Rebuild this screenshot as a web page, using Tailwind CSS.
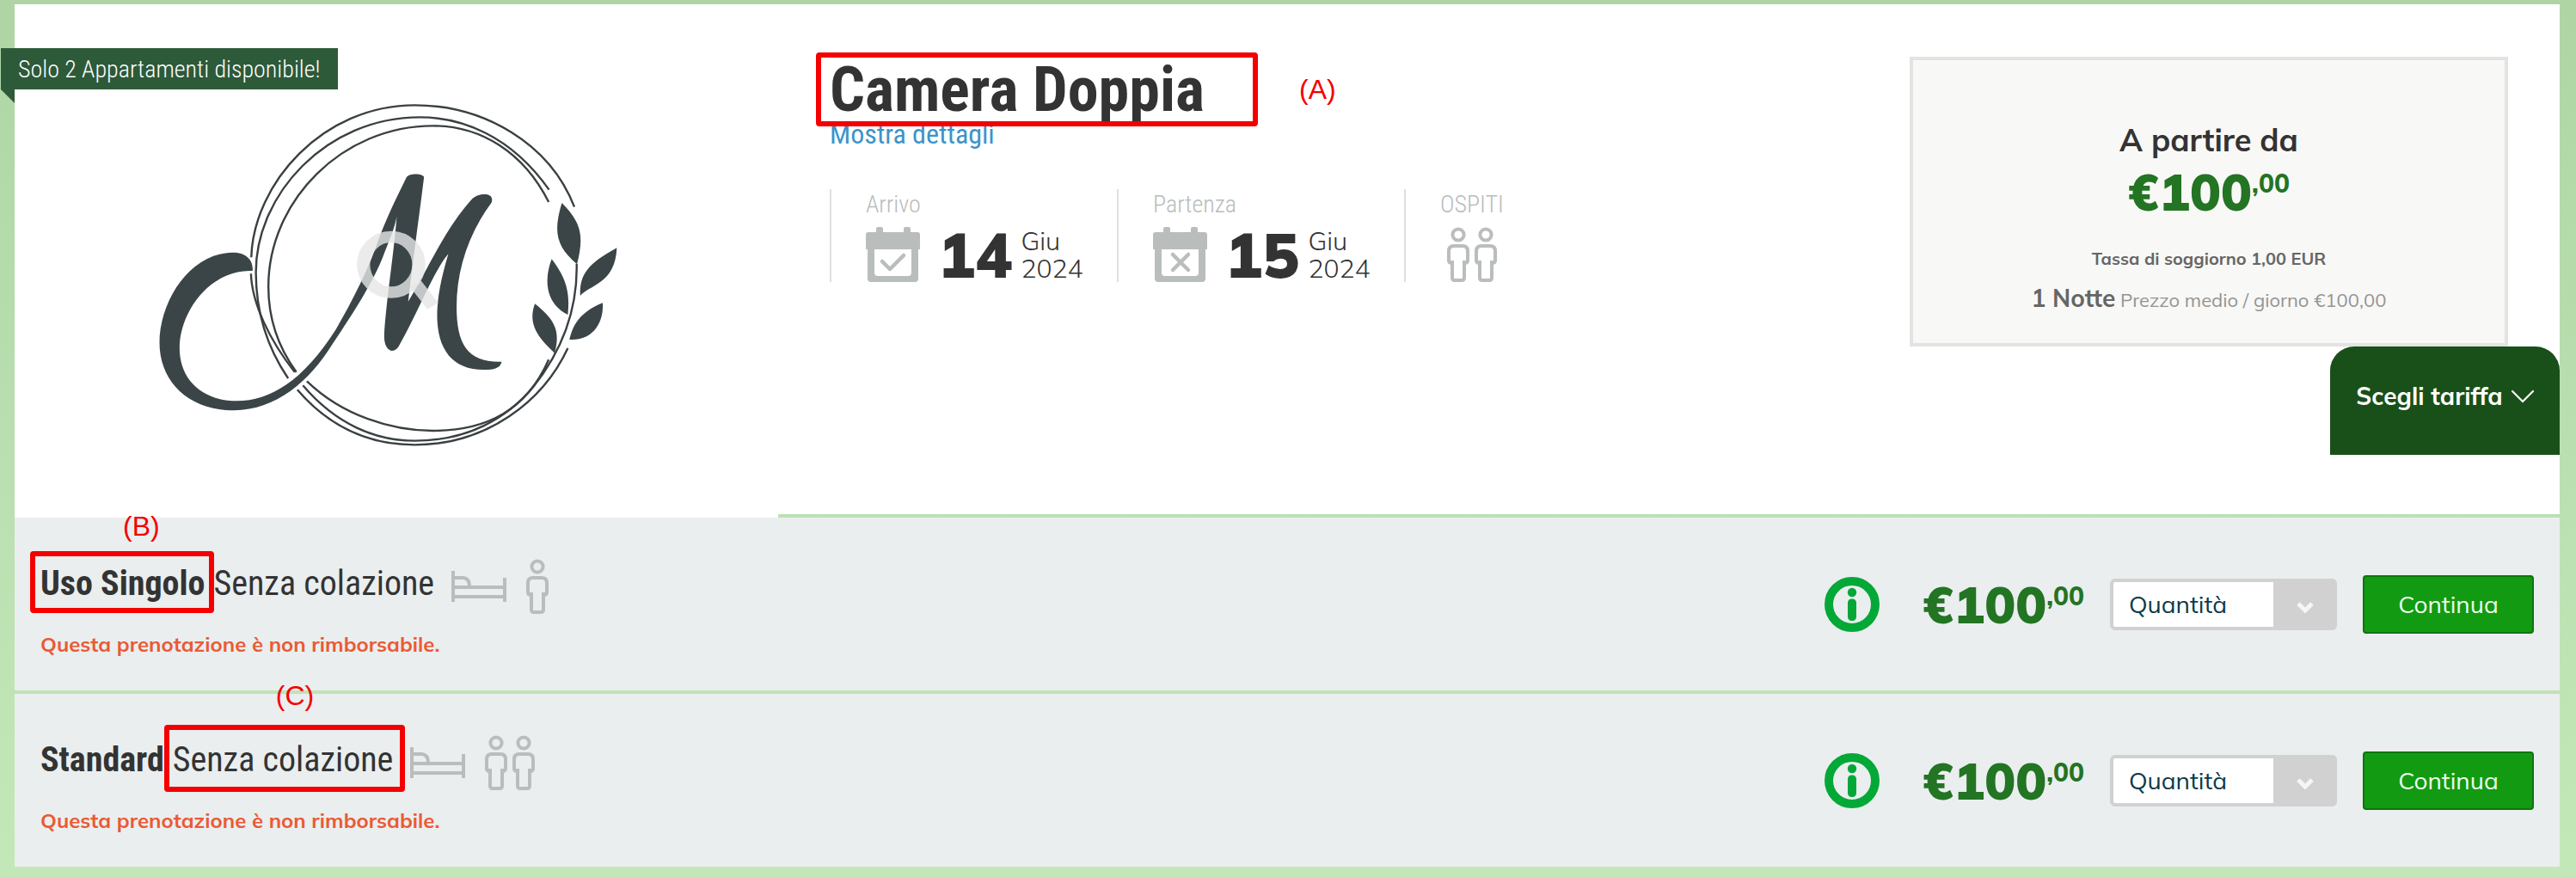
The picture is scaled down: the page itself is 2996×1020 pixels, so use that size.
<!DOCTYPE html>
<html lang="it">
<head>
  <meta charset="UTF-8" />
  <meta name="viewport" content="width=device-width, initial-scale=1.0" />
  <title>Camera Doppia</title>
  <script src="https://cdn.jsdelivr.net/npm/@tailwindcss/browser@4"></script>
</head>
<body class="min-h-screen bg-linear-to-b from-[#aed5a3] via-[#b9dfb0] to-[#c3e8b8] pt-[5px] pb-3 font-[Mulish,Nunito,sans-serif] text-[#333]">

  <!-- shared icons -->
  <svg class="hidden">
    <symbol id="person" viewBox="0 0 26 64">
      <g fill="none" stroke="#b9bdbc" stroke-width="4">
        <circle cx="13" cy="9" r="6.6" />
        <path d="M8 22H18Q24 22 24 28V39Q24 42 20 42V59Q20 62 17 62H9Q6 62 6 59V42Q2 42 2 39V28Q2 22 8 22Z" />
        <path d="M6 39V44M20 39V44" />
      </g>
    </symbol>
    <symbol id="bed" viewBox="0 0 64 36">
      <g fill="none" stroke="#b9bdbc" stroke-width="4">
        <path d="M2 0V36M62 8V36M2 19H62M2 30H62" />
        <path d="M3 8H14Q21 9 21 18" />
      </g>
    </symbol>
    <symbol id="info" viewBox="0 0 64 64">
      <circle cx="32" cy="32" r="27" fill="none" stroke="#04a837" stroke-width="10" />
      <circle cx="32" cy="18" r="5.2" fill="#04a837" />
      <rect x="27" y="25.500" width="10" height="25.500" rx="4.500" fill="#04a837" />
    </symbol>
    <symbol id="calendar" viewBox="0 0 64 64">
      <path fill="#b9bdbc" fill-rule="evenodd" d="M12 6V2Q12 0 14 0H18Q20 0 20 2V6H44V2Q44 0 46 0H50Q52 0 52 2V6H60Q63 6 63 9V26H61V60Q61 64 57 64H6Q2 64 2 60V26H0V9Q0 6 3 6ZM10 26V53Q10 57 14 57H49Q53 57 53 53V26Z" />
    </symbol>
  </svg>

  <main class="mx-[17px] mr-[19px]">
    <!-- room -->
    <section class="relative flex">
      <div class="w-[30%] bg-white pt-[95px] pb-[62px]">
        <svg class="mx-auto h-[440px] w-[600px]" viewBox="0 0 1568 1320" preserveAspectRatio="none">
          <g fill="none" stroke="#3a4042" stroke-width="2.400">
            <path vector-effect="non-scaling-stroke" d="M1325 422C1250 200 1050 67 840 67C560 67 350 340 343 598M342 655C345 760 400 890 475 998" />
            <path vector-effect="non-scaling-stroke" d="M1248 362C1130 170 980 109 855 109C570 109 357 380 357 650C357 780 390 910 455 1020M483 1060C580 1190 700 1252 840 1252C1060 1252 1230 1100 1305 915" />
            <path vector-effect="non-scaling-stroke" d="M1247 405C1170 230 1040 139 895 139C620 139 395 400 395 700C395 820 430 920 480 998M512 1030C620 1150 770 1203 895 1203C1060 1203 1180 1130 1247 955" />
            <path vector-effect="non-scaling-stroke" d="M500 1045C600 1180 720 1238 840 1238C1000 1238 1120 1160 1200 1050C1290 920 1335 780 1332 620" />
          </g>
          <g fill="#3b4548">
            <path d="M347 645C350 605 325 580 285 581C155 585 65 750 64 895C64 1030 150 1132 290 1132C420 1130 520 1030 590 900C660 780 715 680 745 590C765 530 778 500 785 455C778 570 752 760 747 870C746 930 780 940 795 900C850 790 900 640 942 586C920 670 908 740 908 800C908 920 955 990 1050 990C1080 990 1100 985 1104 962C1000 965 967 900 967 770C967 650 1000 520 1073 407C1085 370 1035 372 1015 393C930 500 880 640 820 752C835 600 855 440 868 318C865 305 825 303 815 318C780 400 755 460 735 520C700 640 650 750 600 850C500 1030 400 1099 300 1099C190 1099 125 1020 125 915C125 790 215 640 347 645Z" />
            <path d="M1287 408C1260 510 1270 560 1333 622C1353 530 1350 480 1287 408Z" />
            <path d="M1256 604C1228 690 1245 765 1305 798C1312 720 1300 670 1256 604Z" />
            <path d="M1205 760C1182 830 1215 880 1265 932C1285 850 1260 810 1205 760Z" />
            <path d="M1454 565C1365 620 1340 660 1343 732C1370 695 1450 690 1454 565Z" />
            <path d="M1411 757C1340 790 1320 835 1310 885C1385 890 1415 820 1411 757Z" />
          </g>
          <!-- zoom lens over the picture -->
          <g fill="none" stroke="#e6e6e6" stroke-opacity=".8" stroke-width="40">
            <ellipse cx="768" cy="623" rx="84" ry="97" />
            <path d="M842 690L895 768" />
          </g>
        </svg>
      </div>

      <div class="absolute top-[51px] -left-4">
        <p class="bg-[#2d5a39] px-5 pt-0.5 font-['Roboto_Condensed',sans-serif] text-[28px] leading-[46px] font-light text-white">Solo 2 Appartamenti disponibile!</p>
        <svg class="h-4 w-4" viewBox="0 0 16 16"><path d="M0 0H16V16Z" fill="#2d5a39" /></svg>
      </div>

      <div class="mb-1 flex flex-1 justify-between bg-white pl-[60px]">
        <div class="pt-[65px] font-['Roboto_Condensed',sans-serif]">
          <h1 class="relative text-[72px] leading-[70px] font-bold">
            Camera Doppia
            <span class="absolute -top-[9px] -left-4 z-10 h-[86px] w-[514px] rounded border-6 border-[#f40000]"></span>
            <span class="absolute top-4 left-[546px] font-['Liberation_Sans',sans-serif] text-[32px] leading-9 font-normal text-[#f40000]">(A)</span>
          </h1>
          <a href="#" class="block text-[32px] leading-8 text-[#3a94cb]">Mostra dettagli</a>

          <div class="mt-12 flex text-[28px] text-[#b7bcbb]">
            <div class="w-[334px] border-l-2 border-[#dfe1e0] pl-10">
              <p class="leading-9 font-light">Arrivo</p>
              <div class="mt-2 flex h-16 items-center font-[Mulish,sans-serif] text-[#333]">
                <svg class="h-16 w-16" viewBox="0 0 64 64">
                  <use href="#calendar" />
                  <path d="M19 40L28 49L44 33" fill="none" stroke="#b9bdbc" stroke-width="4.500" stroke-linecap="round" stroke-linejoin="round" />
                </svg>
                <span class="ml-5 text-[72px] leading-none font-black">14</span>
                <span class="ml-2.5 text-[30px] leading-8 font-light">Giu<br />2024</span>
              </div>
            </div>
            <div class="w-[334px] border-l-2 border-[#dfe1e0] pl-10">
              <p class="leading-9 font-light">Partenza</p>
              <div class="mt-2 flex h-16 items-center font-[Mulish,sans-serif] text-[#333]">
                <svg class="h-16 w-16" viewBox="0 0 64 64">
                  <use href="#calendar" />
                  <path d="M23 32L41 50M41 32L23 50" fill="none" stroke="#b9bdbc" stroke-width="4.500" stroke-linecap="round" />
                </svg>
                <span class="ml-5 text-[72px] leading-none font-black">15</span>
                <span class="ml-2.5 text-[30px] leading-8 font-light">Giu<br />2024</span>
              </div>
            </div>
            <div class="border-l-2 border-[#dfe1e0] pl-10">
              <p class="leading-9 font-light">OSPITI</p>
              <div class="mt-2 flex gap-1.5 pl-2">
                <svg class="h-16 w-[26px]"><use href="#person" /></svg>
                <svg class="h-16 w-[26px]"><use href="#person" /></svg>
              </div>
            </div>
          </div>
        </div>

        <div class="flex w-[756px] flex-col pt-[61px]">
          <div class="mr-[60px] border-4 border-[#e3e4e2] bg-[#f8f8f6] pt-[71px] pb-[34px] text-center">
            <p class="text-[36px] leading-11 font-bold">A partire da</p>
            <p class="mt-2 flex justify-center text-[60px] leading-[60px] font-black text-[#237423]">€100<span class="mt-[5px] text-[30px] leading-[30px] font-extrabold">,00</span></p>
            <p class="mt-[34px] text-[20px] leading-7 font-bold text-[#666]">Tassa di soggiorno 1,00 EUR</p>
            <p class="mt-4 text-[22px] leading-8 text-[#949494]"><b class="text-[28px] text-[#666]">1 Notte</b> Prezzo medio / giorno €100,00</p>
          </div>
          <button type="button" class="flex h-[126px] w-[267px] items-center justify-center gap-2.5 self-end rounded-t-[28px] bg-[#195019] pb-2.5 text-[28px] font-bold text-white">
            Scegli tariffa
            <svg class="h-4 w-[26px]" viewBox="0 0 26 16"><path d="M1 2L13 14L25 2" fill="none" stroke="#fff" stroke-width="2.200" stroke-linecap="round" /></svg>
          </button>
        </div>
      </div>
    </section>

    <!-- rates -->
    <section class="flex flex-col gap-1">
      <div class="flex h-[201px] items-center justify-between bg-[#eaeeef] px-[30px]">
        <div class="self-start pt-12">
          <div class="flex font-['Roboto_Condensed',sans-serif] text-[40px] leading-[58px]">
            <b class="relative">
              Uso Singolo
              <span class="absolute -top-[9px] -left-3 h-[72px] w-[214px] rounded border-6 border-[#f40000]"></span>
              <span class="absolute -top-14 left-24 font-['Liberation_Sans',sans-serif] text-[32px] leading-9 font-normal text-[#f40000]">(B)</span>
            </b>
            <span class="ml-2.5">Senza colazione</span>
            <svg class="mt-3.5 ml-5 h-9 w-16"><use href="#bed" /></svg>
            <svg class="ml-[23px] h-16 w-[26px]"><use href="#person" /></svg>
          </div>
          <p class="mt-[19px] text-[24px] leading-8 font-bold text-[#ea5a35]">Questa prenotazione è non rimborsabile.</p>
        </div>
        <div class="flex items-center gap-[30px]">
          <svg class="mr-5 h-16 w-16"><use href="#info" /></svg>
          <p class="flex text-[60px] leading-[60px] font-black text-[#237423]">€100<span class="mt-[5px] text-[30px] leading-[30px] font-extrabold">,00</span></p>
          <div class="relative">
            <select aria-label="Quantità" class="h-[60px] w-[264px] appearance-none rounded-md border-4 border-[#d1d1d1] bg-white pl-[18px] text-[28px] leading-9 text-[#0b3a48]">
              <option>Quantità</option>
            </select>
            <span class="pointer-events-none absolute inset-y-0 right-0 flex w-[74px] items-center justify-center rounded-r-md bg-[#d1d1d1] pt-2">
              <svg class="h-4 w-5" viewBox="0 0 20 16"><path d="M2 3L10 11L18 3" fill="none" stroke="#f4f7f6" stroke-width="5" /></svg>
            </span>
          </div>
          <button type="button" class="h-[68px] w-[199px] rounded border-2 border-[#0c760c] bg-[#139a13] text-[28px] text-[#eaffea]">Continua</button>
        </div>
      </div>

      <div class="flex h-[201px] items-center justify-between bg-[#eaeeef] px-[30px]">
        <div class="self-start pt-12">
          <div class="flex font-['Roboto_Condensed',sans-serif] text-[40px] leading-[58px]">
            <b>Standard</b>
            <span class="relative ml-2.5">
              Senza colazione
              <span class="absolute -top-3 -left-2.5 h-[78px] w-[280px] rounded border-6 border-[#f40000]"></span>
              <span class="absolute -top-16 left-[120px] font-['Liberation_Sans',sans-serif] text-[32px] leading-9 text-[#f40000]">(C)</span>
            </span>
            <svg class="mt-3.5 ml-5 h-9 w-16"><use href="#bed" /></svg>
            <svg class="ml-[23px] h-16 w-[26px]"><use href="#person" /></svg>
            <svg class="ml-1.5 h-16 w-[26px]"><use href="#person" /></svg>
          </div>
          <p class="mt-[19px] text-[24px] leading-8 font-bold text-[#ea5a35]">Questa prenotazione è non rimborsabile.</p>
        </div>
        <div class="flex items-center gap-[30px]">
          <svg class="mr-5 h-16 w-16"><use href="#info" /></svg>
          <p class="flex text-[60px] leading-[60px] font-black text-[#237423]">€100<span class="mt-[5px] text-[30px] leading-[30px] font-extrabold">,00</span></p>
          <div class="relative">
            <select aria-label="Quantità" class="h-[60px] w-[264px] appearance-none rounded-md border-4 border-[#d1d1d1] bg-white pl-[18px] text-[28px] leading-9 text-[#0b3a48]">
              <option>Quantità</option>
            </select>
            <span class="pointer-events-none absolute inset-y-0 right-0 flex w-[74px] items-center justify-center rounded-r-md bg-[#d1d1d1] pt-2">
              <svg class="h-4 w-5" viewBox="0 0 20 16"><path d="M2 3L10 11L18 3" fill="none" stroke="#f4f7f6" stroke-width="5" /></svg>
            </span>
          </div>
          <button type="button" class="h-[68px] w-[199px] rounded border-2 border-[#0c760c] bg-[#139a13] text-[28px] text-[#eaffea]">Continua</button>
        </div>
      </div>
    </section>
  </main>
</body>
</html>
